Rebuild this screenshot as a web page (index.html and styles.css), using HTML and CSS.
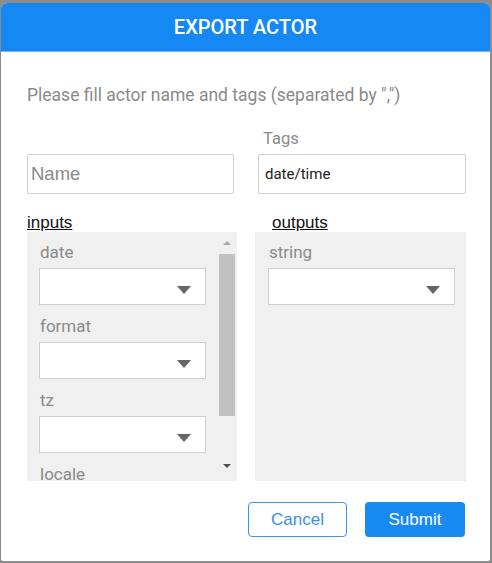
FILE: index.html
```html
<!DOCTYPE html>
<html lang="en">
<head>
    <meta charset="UTF-8">
    <meta name="viewport" content="width=device-width, initial-scale=1.0">
    <title>Export Actor</title>
    <link rel="stylesheet" href="styles.css">
</head>
<body>

    <div class="dialog">
        <div class="dialog-header">EXPORT ACTOR</div>

        <div class="dialog-body">
            <p class="hint">Please fill actor name and tags (separated by ",")</p>

            <div class="fields">
                <div class="field name-field">
                    <input type="text" class="text-input name-input" placeholder="Name">
                </div>
                <div class="field tags-field">
                    <label class="field-label">Tags</label>
                    <input type="text" class="text-input" value="date/time">
                </div>
            </div>

            <div class="ports">
                <div class="port-col">
                    <h4 class="port-title">inputs</h4>
                    <div class="port-panel">
                        <div class="port-list">
                            <div class="port">
                                <label class="port-label">date</label>
                                <div class="select"><select></select></div>
                            </div>
                            <div class="port">
                                <label class="port-label">format</label>
                                <div class="select"><select></select></div>
                            </div>
                            <div class="port">
                                <label class="port-label">tz</label>
                                <div class="select"><select></select></div>
                            </div>
                            <div class="port">
                                <label class="port-label">locale</label>
                                <div class="select"><select></select></div>
                            </div>
                        </div>
                        <!-- scrollbar for the inputs list -->
                        <div class="scrollbar">
                            <div class="scroll-btn up"></div>
                            <div class="scroll-track">
                                <div class="scroll-thumb"></div>
                            </div>
                            <div class="scroll-btn down"></div>
                        </div>
                    </div>
                </div>

                <div class="port-col">
                    <h4 class="port-title outputs-title">outputs</h4>
                    <div class="port-panel">
                        <div class="port-list">
                            <div class="port">
                                <label class="port-label">string</label>
                                <div class="select"><select></select></div>
                            </div>
                        </div>
                    </div>
                </div>
            </div>

            <div class="actions">
                <button class="btn btn-cancel">Cancel</button>
                <button class="btn btn-submit">Submit</button>
            </div>
        </div>
    </div>

</body>
</html>
```

FILE: styles.css
```css
:root {
    --blue: #1688f3;
    --panel-bg: #f0f0f0;
    --border: #cfcfcf;
    --label: #8a8a8a;
}

body {
    margin: 0;
    background-color: #8c8c8c;
    font-family: Roboto, sans-serif;
}

.dialog {
    width: 489px;
    height: 558px;
    margin: 3px 0 0 1px;
    background: white;
    border-radius: 6px 6px 2px 2px;
    overflow: hidden;
}

.dialog-header {
    height: 48px;
    line-height: 48px;
    background: var(--blue);
    border-bottom: 1px solid #6fb4f6;
    color: white;
    text-align: center;
    font-size: 20px;
    font-weight: 500;
}

.dialog-body {
    padding: 0 24px 0 26px;
}

.hint {
    margin: 33px 0 0;
    line-height: 20px;
    font-size: 17.5px;
    color: var(--label);
}

.fields {
    display: flex;
    justify-content: space-between;
    align-items: flex-end;
    margin-top: 24px;
}

.name-field {
    width: 207px;
}

.tags-field {
    width: 208px;
}

.field-label {
    display: block;
    padding-left: 5px;
    margin-bottom: 5px;
    line-height: 20px;
    font-size: 16.5px;
    color: var(--label);
}

.text-input {
    box-sizing: border-box;
    width: 100%;
    height: 40px;
    padding: 0 6px;
    border: 1px solid var(--border);
    border-radius: 2px;
    font-family: Roboto, sans-serif;
    font-size: 15px;
    color: #222;
    outline: none;
}

.name-input {
    padding: 2px 3px 0;
}

.text-input::placeholder {
    font-family: "Liberation Sans", Arial, sans-serif;
    font-size: 18.5px;
    color: #8a8a8a;
}

.ports {
    display: flex;
    gap: 18px;
    margin-top: 19px;
}

.port-col {
    width: 210px;
}

.port-col + .port-col {
    width: 211px;
}

.port-title {
    margin: 0;
    line-height: 19px;
    font-family: "Liberation Sans", Arial, sans-serif;
    font-size: 17px;
    font-weight: normal;
    text-decoration: underline;
    color: #111;
}

.outputs-title {
    padding-left: 17px;
}

.port-panel {
    display: flex;
    height: 249px;
    background: var(--panel-bg);
}

.port-list {
    flex: 1;
    overflow: hidden;
    padding: 10px 11px 0 13px;
}

.port-panel .scrollbar + .port-list,
.port-list:has(+ .scrollbar) {
    padding: 10px 13px 0 12px;
}

.scrollbar {
    display: flex;
    flex-direction: column;
    width: 16px;
    margin-right: 2px;
}

.scroll-btn {
    height: 22px;
    display: flex;
    align-items: center;
    justify-content: center;
}

.scroll-btn.down {
    height: 17px;
    align-items: flex-start;
    padding-top: 2px;
}

/* arrow glyphs on the scroll buttons */
.scroll-btn.up::before {
    content: "";
    border-left: 4.5px solid transparent;
    border-right: 4.5px solid transparent;
    border-bottom: 4.5px solid #a8a8a8;
}

.scroll-btn.down::before {
    content: "";
    border-left: 4.5px solid transparent;
    border-right: 4.5px solid transparent;
    border-top: 4.5px solid #505050;
}

.scroll-track {
    flex: 1;
}

.scroll-thumb {
    height: 162px;
    background: #c1c1c1;
}

.port {
    margin-bottom: 11px;
}

.port-label {
    display: block;
    margin-bottom: 6px;
    padding-left: 1px;
    line-height: 20px;
    font-size: 17px;
    color: var(--label);
}

.select {
    position: relative;
}

.select select {
    appearance: none;
    box-sizing: border-box;
    width: 100%;
    height: 37px;
    border: 1px solid var(--border);
    border-radius: 0;
    background: white;
    outline: none;
}

/* dropdown caret */
.select::after {
    content: "";
    position: absolute;
    right: 15px;
    top: 18px;
    border-left: 7.5px solid transparent;
    border-right: 7.5px solid transparent;
    border-top: 8px solid #666;
    pointer-events: none;
}

.actions {
    display: flex;
    justify-content: flex-end;
    gap: 18px;
    margin-top: 21px;
    padding-right: 1px;
}

.btn {
    box-sizing: border-box;
    width: 99px;
    height: 35px;
    border-radius: 4px;
    font-family: "Liberation Sans", Arial, sans-serif;
    font-size: 17px;
    cursor: pointer;
}

.btn-cancel {
    background: white;
    border: 1px solid #3b93ee;
    color: #3a8fe9;
}

.btn-submit {
    width: 100px;
    background: #1a8af3;
    border: none;
    color: white;
}
```
